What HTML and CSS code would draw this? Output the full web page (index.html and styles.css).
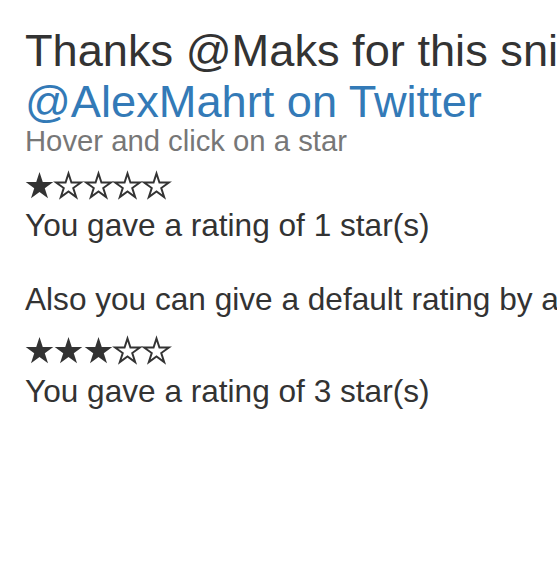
FILE: index.html
```html
<!DOCTYPE html>
<html lang="en">
<head>
<meta charset="utf-8">
<title>Star rating</title>
<link rel="stylesheet" href="styles.css">
</head>
<body>
<svg class="defs" width="0" height="0" aria-hidden="true">
  <defs>
    <polygon id="star-shape" points="14.5,0 17.76,10.02 28.29,10.02 19.77,16.21 23.02,26.23 14.5,20.04 5.98,26.23 9.23,16.21 0.71,10.02 11.24,10.02"/>
  </defs>
</svg>
<div class="page">
  <h1 class="title">Thanks @Maks for this snippet!<br><a class="title-link" href="#">@AlexMahrt on Twitter</a></h1>
  <small class="hint">Hover and click on a star</small>

  <div class="stars">
    <svg class="star star-full" viewBox="0 0 29 26.5"><use href="#star-shape"/></svg>
    <svg class="star star-empty" viewBox="0 0 29 26.5"><use href="#star-shape"/></svg>
    <svg class="star star-empty" viewBox="0 0 29 26.5"><use href="#star-shape"/></svg>
    <svg class="star star-empty" viewBox="0 0 29 26.5"><use href="#star-shape"/></svg>
    <svg class="star star-empty" viewBox="0 0 29 26.5"><use href="#star-shape"/></svg>
  </div>
  <p class="rating-text rating-first">You gave a rating of 1 star(s)</p>

  <p class="rating-text note">Also you can give a default rating by adding attribute data-default</p>

  <div class="stars stars-second">
    <svg class="star star-full" viewBox="0 0 29 26.5"><use href="#star-shape"/></svg>
    <svg class="star star-full" viewBox="0 0 29 26.5"><use href="#star-shape"/></svg>
    <svg class="star star-full" viewBox="0 0 29 26.5"><use href="#star-shape"/></svg>
    <svg class="star star-empty" viewBox="0 0 29 26.5"><use href="#star-shape"/></svg>
    <svg class="star star-empty" viewBox="0 0 29 26.5"><use href="#star-shape"/></svg>
  </div>
  <p class="rating-text rating-second">You gave a rating of 3 star(s)</p>
</div>
</body>
</html>
```
FILE: styles.css
```css
html, body {
  margin: 0;
  padding: 0;
  background: #fff;
  overflow: hidden;
}

body {
  font-family: "Liberation Sans", Arial, Helvetica, sans-serif;
  color: #333;
}

.defs {
  position: absolute;
  width: 0;
  height: 0;
  overflow: hidden;
}

.page {
  padding: 26px 0 0 25px;
  white-space: nowrap;
}

.title {
  margin: 0;
  font-size: 45.2px;
  line-height: 50.5px;
  font-weight: normal;
  color: #333;
}

.title-link {
  color: #337ab7;
  text-decoration: none;
}

.hint {
  display: block;
  font-size: 29.25px;
  line-height: 1;
  color: #777;
}

.stars {
  display: flex;
  gap: 0.3px;
  height: 26.5px;
  margin-top: 15.5px;
}

.star {
  display: block;
  width: 29px;
  height: 26.5px;
  overflow: visible;
}

.star-full {
  fill: #333;
}

.star-empty {
  fill: #fff;
  stroke: #333;
  stroke-width: 2.2px;
  stroke-linejoin: miter;
}

.star-empty use {
  transform: translate(14.5px, 14.5px) scale(0.9) translate(-14.5px, -14.5px);
}

.rating-text {
  margin: 0;
  font-size: 31.6px;
  line-height: 36px;
}

.rating-first {
  margin-top: 9px;
}

.note {
  margin-top: 38px;
}

.stars-second {
  margin-top: 20px;
}

.rating-second {
  margin-top: 9px;
}
```
